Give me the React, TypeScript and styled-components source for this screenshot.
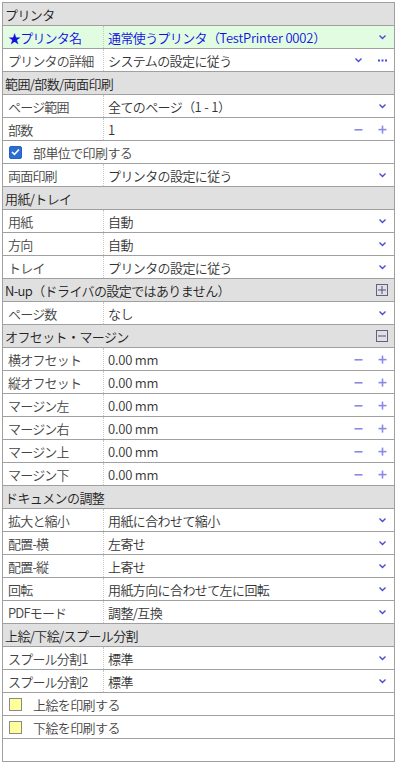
import React from 'react';
import styled, { createGlobalStyle } from 'styled-components';

const GlobalStyle = createGlobalStyle`
  html, body {
    margin: 0;
    padding: 0;
    background: #ffffff;
  }
  body {
    font-family: "Noto Sans CJK JP", "Noto Sans", sans-serif;
    font-size: 12px;
    color: #333;
  }
`;

const PageStyled = styled.div`
  padding: 2px 3px 2px 2px;
`;

const PanelStyled = styled.div`
  border: 1px solid #a0a0a0;
  border-bottom: none;
  display: flex;
  flex-direction: column;
`;

const HeaderStyled = styled.div`
  height: 22px;
  border-bottom: 1px solid #a0a0a0;
  background: #e0e0e0;
  display: flex;
  align-items: center;
  padding-left: 2px;
  color: #222;
  font-size: 13px;
  font-weight: 350;
  letter-spacing: -0.6px;
`;

const HeaderTitleStyled = styled.span`
  flex: 1;
`;

const RowStyled = styled.div<{ $highlight?: boolean }>`
  height: 22px;
  border-bottom: 1px solid #a0a0a0;
  background: ${({ $highlight }) => ($highlight ? '#e2fce2' : '#ffffff')};
  display: flex;
  align-items: stretch;
`;

const LabelStyled = styled.div<{ $highlight?: boolean }>`
  width: 95px;
  padding-left: 5px;
  border-right: 1px dotted #c8c8c8;
  display: flex;
  align-items: center;
  color: ${({ $highlight }) => ($highlight ? '#1010e0' : '#444')};
  font-size: 13px;
  font-weight: 350;
  letter-spacing: -0.8px;
  white-space: nowrap;
`;

const ValueStyled = styled.div<{ $highlight?: boolean }>`
  flex: 1;
  padding-left: 4px;
  display: flex;
  align-items: center;
  color: ${({ $highlight }) => ($highlight ? '#1010e0' : '#333')};
  font-size: 13px;
  font-weight: 350;
  letter-spacing: -0.6px;
  white-space: nowrap;
  overflow: hidden;
`;

const LatinStyled = styled.span`
  letter-spacing: -0.2px;
`;

const ActionsStyled = styled.div`
  display: flex;
  width: 48px;
  flex-shrink: 0;
`;

const SlotStyled = styled.div`
  width: 24px;
  display: flex;
  align-items: center;
  justify-content: center;
`;

const CheckRowStyled = styled.label`
  flex: 1;
  display: flex;
  align-items: center;
  padding-left: 6px;
  gap: 11px;
  color: #444;
  font-size: 13px;
  font-weight: 350;
  letter-spacing: -0.6px;
`;

const CheckBoxStyled = styled.span<{ $checked?: boolean }>`
  width: 13px;
  height: 13px;
  box-sizing: border-box;
  border-radius: ${({ $checked }) => ($checked ? '2px' : '0')};
  border: 1px solid ${({ $checked }) => ($checked ? '#2264c8' : '#8a8a8a')};
  background: ${({ $checked }) => ($checked ? '#2b6dd0' : '#ffff9c')};
  display: flex;
  align-items: center;
  justify-content: center;
`;

const ToggleBoxStyled = styled.span`
  width: 12px;
  height: 12px;
  box-sizing: border-box;
  border: 1px solid #60608a;
  display: flex;
  align-items: center;
  justify-content: center;
`;

const Chevron = () => (
  <svg width="9" height="6" viewBox="0 0 9 6">
    <path d="M1.5 1.5 L4.5 4.5 L7.5 1.5" fill="none" stroke="#4a4ad8" strokeWidth="1.4" />
  </svg>
);

const Minus = () => (
  <svg width="9" height="9" viewBox="0 0 9 9">
    <rect x="0.5" y="4" width="8" height="1.6" fill="#8a8ae6" />
  </svg>
);

const Plus = () => (
  <svg width="9" height="9" viewBox="0 0 9 9">
    <rect x="0.5" y="3.8" width="8" height="1.6" fill="#8a8ae6" />
    <rect x="3.7" y="0.6" width="1.6" height="8" fill="#8a8ae6" />
  </svg>
);

const Dots = () => (
  <svg width="9" height="3" viewBox="0 0 9 3">
    <rect x="0" y="0.5" width="2" height="2" fill="#4a4ad8" />
    <rect x="3.5" y="0.5" width="2" height="2" fill="#4a4ad8" />
    <rect x="7" y="0.5" width="2" height="2" fill="#4a4ad8" />
  </svg>
);

const Check = () => (
  <svg width="9" height="8" viewBox="0 0 9 8">
    <path d="M1 4 L3.5 6.3 L8 1.5" fill="none" stroke="#fff" strokeWidth="1.6" />
  </svg>
);

const Toggle = ({ open }: { open: boolean }) => (
  <ToggleBoxStyled>
    <svg width="8" height="8" viewBox="0 0 8 8">
      <rect x="0" y="3.5" width="8" height="1" fill="#50507a" />
      {!open && <rect x="3.5" y="0" width="1" height="8" fill="#50507a" />}
    </svg>
  </ToggleBoxStyled>
);

type Row =
  | { kind: 'select'; label: string; value: React.ReactNode; highlight?: boolean; more?: boolean }
  | { kind: 'spin'; label: string; value: React.ReactNode }
  | { kind: 'check'; label: string; checked: boolean }
  | { kind: 'empty' };

type Section = { title: string; toggle?: 'open' | 'closed'; rows: Row[] };

const mm = <LatinStyled>0.00 mm</LatinStyled>;

const sections: Section[] = [
  {
    title: 'プリンタ',
    rows: [
      {
        kind: 'select',
        label: '★プリンタ名',
        value: (
          <>
            通常使うプリンタ（<LatinStyled>TestPrinter 0002</LatinStyled>）
          </>
        ),
        highlight: true,
      },
      { kind: 'select', label: 'プリンタの詳細', value: 'システムの設定に従う', more: true },
    ],
  },
  {
    title: '範囲/部数/両面印刷',
    rows: [
      {
        kind: 'select',
        label: 'ページ範囲',
        value: (
          <>
            全てのページ（<LatinStyled>1 - 1</LatinStyled>）
          </>
        ),
      },
      { kind: 'spin', label: '部数', value: '1' },
      { kind: 'check', label: '部単位で印刷する', checked: true },
      { kind: 'select', label: '両面印刷', value: 'プリンタの設定に従う' },
    ],
  },
  {
    title: '用紙/トレイ',
    rows: [
      { kind: 'select', label: '用紙', value: '自動' },
      { kind: 'select', label: '方向', value: '自動' },
      { kind: 'select', label: 'トレイ', value: 'プリンタの設定に従う' },
    ],
  },
  {
    title: 'N-up（ドライバの設定ではありません）',
    toggle: 'closed',
    rows: [{ kind: 'select', label: 'ページ数', value: 'なし' }],
  },
  {
    title: 'オフセット・マージン',
    toggle: 'open',
    rows: [
      { kind: 'spin', label: '横オフセット', value: mm },
      { kind: 'spin', label: '縦オフセット', value: mm },
      { kind: 'spin', label: 'マージン左', value: mm },
      { kind: 'spin', label: 'マージン右', value: mm },
      { kind: 'spin', label: 'マージン上', value: mm },
      { kind: 'spin', label: 'マージン下', value: mm },
    ],
  },
  {
    title: 'ドキュメンの調整',
    rows: [
      { kind: 'select', label: '拡大と縮小', value: '用紙に合わせて縮小' },
      { kind: 'select', label: '配置-横', value: '左寄せ' },
      { kind: 'select', label: '配置-縦', value: '上寄せ' },
      { kind: 'select', label: '回転', value: '用紙方向に合わせて左に回転' },
      { kind: 'select', label: 'PDFモード', value: '調整/互換' },
    ],
  },
  {
    title: '上絵/下絵/スプール分割',
    rows: [
      { kind: 'select', label: 'スプール分割1', value: '標準' },
      { kind: 'select', label: 'スプール分割2', value: '標準' },
      { kind: 'check', label: '上絵を印刷する', checked: false },
      { kind: 'check', label: '下絵を印刷する', checked: false },
      { kind: 'empty' },
    ],
  },
];

const PropertyRow = ({ row }: { row: Row }) => {
  if (row.kind === 'empty') return <RowStyled />;
  if (row.kind === 'check') {
    return (
      <RowStyled>
        <CheckRowStyled>
          <CheckBoxStyled $checked={row.checked}>{row.checked && <Check />}</CheckBoxStyled>
          {row.label}
        </CheckRowStyled>
      </RowStyled>
    );
  }
  const highlight = row.kind === 'select' && row.highlight;
  return (
    <RowStyled $highlight={highlight}>
      <LabelStyled $highlight={highlight}>{row.label}</LabelStyled>
      <ValueStyled $highlight={highlight}>{row.value}</ValueStyled>
      <ActionsStyled>
        <SlotStyled>
          {row.kind === 'select' && row.more && <Chevron />}
          {row.kind === 'spin' && <Minus />}
        </SlotStyled>
        <SlotStyled>
          {row.kind === 'select' && (row.more ? <Dots /> : <Chevron />)}
          {row.kind === 'spin' && <Plus />}
        </SlotStyled>
      </ActionsStyled>
    </RowStyled>
  );
};

const App: React.FC = () => (
  <>
    <GlobalStyle />
    <PageStyled>
      <PanelStyled>
        {sections.map((section) => (
          <React.Fragment key={section.title}>
            <HeaderStyled>
              <HeaderTitleStyled>{section.title}</HeaderTitleStyled>
              {section.toggle && (
                <ActionsStyled>
                  <SlotStyled />
                  <SlotStyled>
                    <Toggle open={section.toggle === 'open'} />
                  </SlotStyled>
                </ActionsStyled>
              )}
            </HeaderStyled>
            {section.rows.map((row, i) => (
              <PropertyRow key={i} row={row} />
            ))}
          </React.Fragment>
        ))}
      </PanelStyled>
    </PageStyled>
  </>
);

export default App;
